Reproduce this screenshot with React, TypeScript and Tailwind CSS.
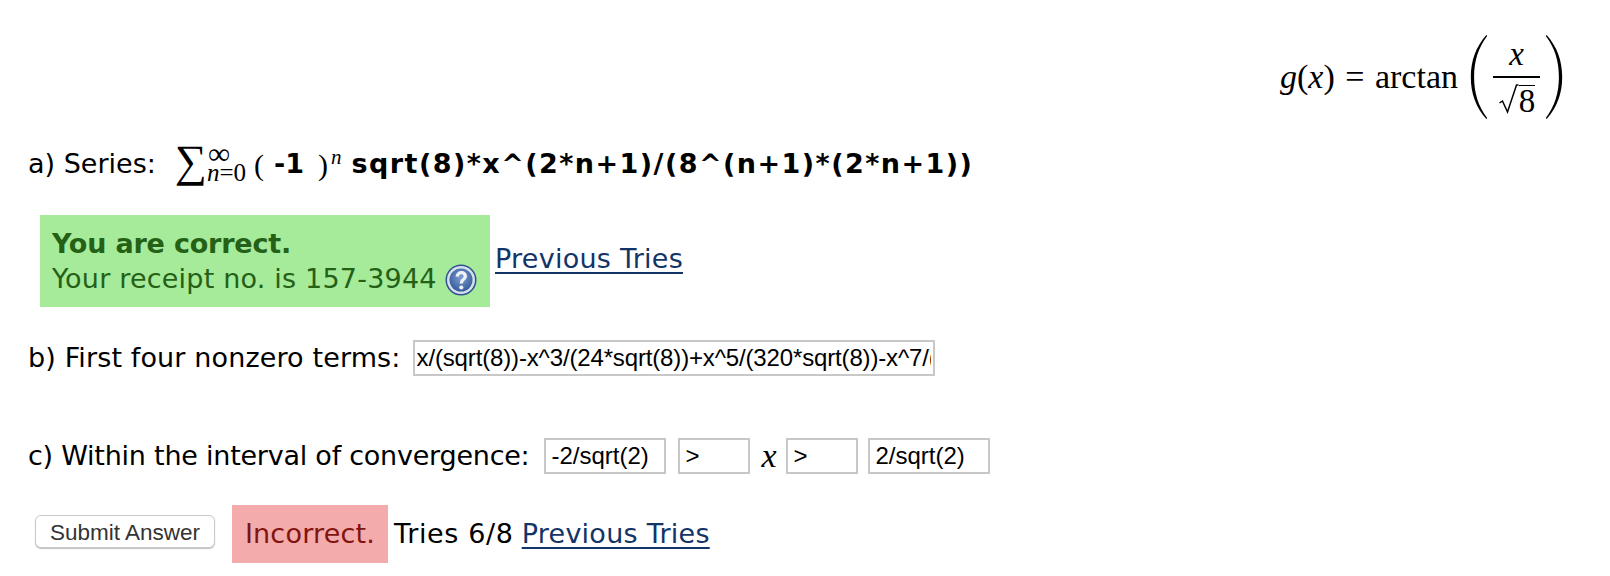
const body = "font-['DejaVu_Sans','Liberation_Sans',sans-serif]";
const math = "font-['Liberation_Serif',serif]";
const field = "h-[36px] border-2 border-[#c8c8c8] bg-white px-[2px] text-[24px] text-black font-['Liberation_Sans',sans-serif] outline-none";

function Paren({ flip }: { flip?: boolean }) {
  return (
    <svg width="18" height="86" viewBox="2 0 22 86" preserveAspectRatio="none" className={flip ? "-scale-x-100" : ""}>
      <path d="M22 1C9 13 3 27 3 43s6 30 19 42l1-1C12 72 7 59 7 43S12 14 23 2z" fill="#000" />
    </svg>
  );
}

function HelpIcon() {
  return (
    <svg width="32" height="32" viewBox="0 0 32 32">
      <defs>
        <radialGradient id="help" cx="50%" cy="40%" r="65%">
          <stop offset="0%" stopColor="#7f9fcf" />
          <stop offset="100%" stopColor="#2f5596" />
        </radialGradient>
      </defs>
      <circle cx="16" cy="16" r="15.500" fill="#2f5190" />
      <circle cx="16" cy="16" r="14" fill="#d5e0ee" />
      <circle cx="16" cy="16" r="11.500" fill="url(#help)" />
      <path d="M10.500 12.500c.5-3.500 2.800-5.500 5.800-5.500 3.200 0 5.700 2.100 5.700 5 0 4-4 4-4 7.500h-3.200c0-4.800 3.800-4.700 3.800-7.300 0-1.100-.9-2-2.300-2s-2.300.9-2.600 2.600z" fill="#eef2f8" />
      <circle cx="16.300" cy="23.500" r="2.100" fill="#eef2f8" />
    </svg>
  );
}

function PrevTries() {
  return (
    <a href="#" className="tracking-[0.25px] text-[#133467] underline decoration-2 underline-offset-[4px]">
      Previous Tries
    </a>
  );
}

export default function App() {
  return (
    <div className={`${body} h-[576px] w-[1610px] overflow-hidden bg-white text-[27px] text-black`}>
      {/* formula */}
      <div className="flex pt-[34px] pr-[47px]">
        <div className="ml-auto flex h-[86px] items-center">
          <span className={`${math} mr-[12px] text-[34px] leading-none whitespace-pre`}>
            <i>g</i>(<i>x</i>) <span className="mx-[2px]">=</span> arctan
          </span>
          <Paren />
          <span className={`${math} mx-[5px] flex w-[47px] flex-col items-center text-[33px] leading-none`}>
            <i className="pb-[5px]">x</i>
            <span className="h-[2px] w-full bg-black" />
            <span className="flex items-end pt-[6px]">
              <svg width="21" height="32" viewBox="0 0 20 32">
                <path d="M1 19l3-2 5 11L18 1h2" fill="none" stroke="#000" strokeWidth="1.500" />
              </svg>
              <span className="border-t-[1.500px] border-black leading-[30px]">8</span>
            </span>
          </span>
          <Paren flip />
        </div>
      </div>

      {/* a */}
      <div className="mt-[24px] flex h-[40px] items-center pl-[28px]">
        <span>a) Series:</span>
        <span className={`${math} ml-[19px] flex items-start`}>
          <span className="-mt-[4px] text-[45px] leading-[40px]">∑</span>
          <span className="flex flex-col text-[25px] leading-[20px]">
            <span className="pl-[1px] text-[31px] leading-[18px]">∞</span>
            <span>
              <i>n</i>=0
            </span>
          </span>
        </span>
        <span className={`${math} ml-[8px] text-[30px]`}>(</span>
        <b className="ml-[10px]">-1</b>
        <span className={`${math} ml-[14px] text-[30px]`}>
          )<sup className="ml-[3px] text-[21px] italic">n</sup>
        </span>
        <b className="ml-[10px] whitespace-pre tracking-[1.450px]">sqrt(8)*x^(2*n+1)/(8^(n+1)*(2*n+1))</b>
      </div>

      {/* a result */}
      <div className="mt-[31px] flex items-start pl-[40px]">
        <div className="flex h-[92px] w-[450px] flex-col justify-center bg-[#a6eb9a] pl-[12px] text-[#256017]">
          <b className="tracking-[-0.2px] leading-[35px]">You are correct.</b>
          <span className="flex items-center tracking-[0.2px] leading-[35px]">
            Your receipt no. is 157-3944
            <span className="ml-[8px] mt-[3px] flex items-center">
              <HelpIcon />
            </span>
          </span>
        </div>
        <span className="ml-[5px] mt-[26px] leading-[36px]">
          <PrevTries />
        </span>
      </div>

      {/* b */}
      <div className="mt-[33px] flex h-[36px] items-center pl-[28px]">
        <span className="tracking-[0.13px]">b) First four nonzero terms:</span>
        <input
          readOnly
          value="x/(sqrt(8))-x^3/(24*sqrt(8))+x^5/(320*sqrt(8))-x^7/(2240*sqrt(8))"
          className={`${field} ml-[12px] w-[522px] tracking-[-0.15px]`}
        />
      </div>

      {/* c */}
      <div className="mt-[62px] flex h-[36px] items-center pl-[28px]">
        <span className="tracking-[-0.24px]">c) Within the interval of convergence:</span>
        <input readOnly value="-2/sqrt(2)" className={`${field} ml-[15px] w-[122px] pl-[5px]`} />
        <input readOnly value=">" className={`${field} ml-[12px] w-[72px] pl-[5px]`} />
        <i className={`${math} ml-[11px] w-[25px] text-[34px] leading-none`}>x</i>
        <input readOnly value=">" className={`${field} w-[72px] pl-[5px]`} />
        <input readOnly value="2/sqrt(2)" className={`${field} ml-[10px] w-[122px] pl-[5px]`} />
      </div>

      {/* submit */}
      <div className="mt-[31px] flex h-[58px] items-center pl-[35px]">
        <button className="mb-[6px] h-[33px] w-[180px] rounded-[6px] border border-[#c9c9c9] bg-white text-[22.500px] text-[#333333] shadow-[0_1px_1px_rgba(0,0,0,0.25)] font-['Liberation_Sans',sans-serif]">
          Submit Answer
        </button>
        <span className="ml-[17px] flex h-[58px] w-[156px] items-center justify-center bg-[#f4abab] tracking-[0.2px] text-[#811311]">
          Incorrect.
        </span>
        <span className="ml-[6px] tracking-[0.65px]">Tries 6/8</span>
        <span className="ml-[8px]">
          <PrevTries />
        </span>
      </div>
    </div>
  );
}
